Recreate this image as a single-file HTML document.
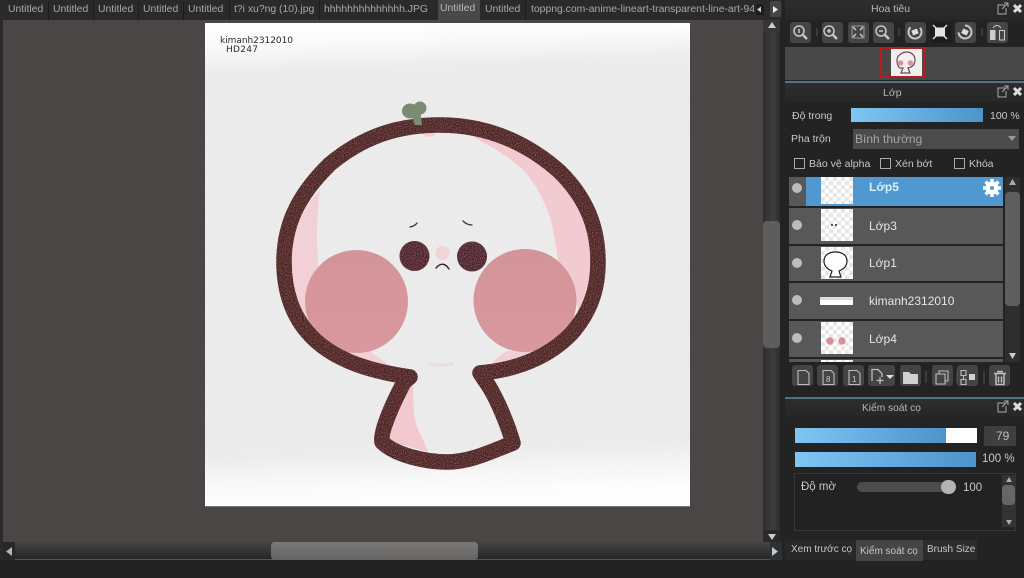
<!DOCTYPE html>
<html><head><meta charset="utf-8"><style>
html,body{margin:0;padding:0;background:#232323}
#r{position:relative;width:1024px;height:578px;overflow:hidden;background:#232323;font-family:"Liberation Sans",sans-serif;color:#c4c4c4;font-size:11px}
#r div,#r span.t{position:absolute}
.t{white-space:nowrap;line-height:14px}
.tab{color:#a9a9a9;top:3px;font-size:10.4px}
.sep{position:absolute;top:1px;width:1px;height:19px;background:#1c1c1c}
.hd{background:linear-gradient(#2e2d2d,#282727);left:785px;width:239px}
.btn{background:#454545;border-radius:3px;width:21px;height:21px;top:22px}
.row{left:789px;width:214px;background:#585858}
.eye{left:792px;width:10px;height:10px;border-radius:50%;background:#bcbcbc}
.th{left:821px;width:32px;height:32px;background-color:#fff;background-image:linear-gradient(45deg,#e6e6e6 25%,transparent 25%,transparent 75%,#e6e6e6 75%),linear-gradient(45deg,#e6e6e6 25%,transparent 25%,transparent 75%,#e6e6e6 75%);background-size:8px 8px;background-position:0 0,4px 4px}
.nm{left:869px;color:#e6e6e6;font-size:12px}
.tb{background:#444;border-radius:3px;width:21px;height:21px;top:365px}
.bar{background:linear-gradient(90deg,#7fc6f5,#4c94c9);}
.ck{width:9px;height:9px;border:1px solid #aaa;top:158px}
svg{position:absolute;overflow:visible}
</style></head><body><div id="r">

<div style="left:0;top:0;width:3px;height:560px;background:#2a2a2a"></div>
<div style="left:3px;top:20px;width:777px;height:522px;background:#4a4645"></div>

<!-- tabs -->
<div style="left:0;top:0;width:784px;height:20px;background:#2b2a2a"></div>
<div style="left:438px;top:0;width:42px;height:20px;background:#4a4948"></div>
<div class="sep" style="left:48px"></div><div class="sep" style="left:93px"></div><div class="sep" style="left:138px"></div><div class="sep" style="left:183px"></div><div class="sep" style="left:229px"></div><div class="sep" style="left:319px"></div><div class="sep" style="left:525px"></div>
<span class="t tab" style="left:8px">Untitled</span>
<span class="t tab" style="left:53px">Untitled</span>
<span class="t tab" style="left:98px">Untitled</span>
<span class="t tab" style="left:143px">Untitled</span>
<span class="t tab" style="left:188px">Untitled</span>
<span class="t tab" style="left:234px">t?i xu?ng (10).jpg</span>
<span class="t tab" style="left:324px">hhhhhhhhhhhhhh.JPG</span>
<span class="t tab" style="left:440px;color:#b8b8b8;top:2px">Untitled</span>
<span class="t tab" style="left:485px">Untitled</span>
<span class="t tab" style="left:531px;width:224px;overflow:hidden">toppng.com-anime-lineart-transparent-line-art-94</span>
<div style="left:754px;top:0;width:30px;height:20px;background:#2b2a2a"></div>
<div style="left:756px;top:4px;width:8px;height:11px;background:#1c1c1c;border-radius:2px"></div>
<div style="left:770px;top:1px;width:11px;height:16px;background:#454545;border-radius:2px"></div>
<svg style="left:0;top:0" width="784" height="20"><path d="M757 9.500l4-3v6z" fill="#ccc"/><path d="M773 6l5 3.500-5 3.500z" fill="#eee"/></svg>

<!-- canvas -->
<svg style="left:205px;top:23px" width="485" height="483" viewBox="205 23 485 483">
<defs>
<filter id="n" x="0" y="0" width="100%" height="100%"><feTurbulence type="fractalNoise" baseFrequency="1.1" numOctaves="2" seed="4"/><feColorMatrix values="0 0 0 0 .45 0 0 0 0 .45 0 0 0 0 .45 .7 0 0 0 -.2"/></filter>
<filter id="m" x="0" y="0" width="100%" height="100%"><feTurbulence type="fractalNoise" baseFrequency=".9" numOctaves="2" seed="9"/><feColorMatrix values="0 0 0 0 .42 0 0 0 0 .2 0 0 0 0 .22 1.6 0 0 0 -.62"/></filter>
<linearGradient id="g" x1="0" y1="0" x2=".04" y2="1"><stop offset="0" stop-color="#fff"/><stop offset=".05" stop-color="#fcfcfc"/><stop offset=".11" stop-color="#f0f0f0"/><stop offset=".9" stop-color="#f0f0f0"/><stop offset=".95" stop-color="#f8f8f8"/><stop offset="1" stop-color="#fdfdfd"/></linearGradient>
<linearGradient id="nf" x1="0" y1="0" x2="0" y2="1"><stop offset="0" stop-color="#000"/><stop offset=".1" stop-color="#fff"/><stop offset=".88" stop-color="#fff"/><stop offset=".96" stop-color="#000"/></linearGradient>
<linearGradient id="c1" x1="0" y1="0" x2="0" y2="1"><stop offset="0" stop-color="#d3949a"/><stop offset="1" stop-color="#d8989e"/></linearGradient>
<path id="o" d="M410 377C375 372 335 362 310 335C292 316 284 290 284 262C284 225 298 195 330 164C365 135 400 125 440 125C490 125 530 145 560 172C585 197 598 225 598 262C598 290 590 312 572 333C548 358 515 370 480 373C483 378 487 383 490 388C497 400 507 422 513 443C490 452 470 462 447 462C425 462 395 455 382 442C380 432 392 405 404 382L410 377" fill="none" stroke-width="15.500" stroke-linejoin="round" stroke-linecap="round"/>
<mask id="os" maskUnits="userSpaceOnUse" x="205" y="23" width="485" height="483"><use href="#o" stroke="#fff"/><circle cx="414.500" cy="256" r="15" fill="#fff"/><circle cx="472" cy="256.500" r="15" fill="#fff"/></mask>
<mask id="nm" maskUnits="userSpaceOnUse" x="205" y="23" width="485" height="483"><rect x="205" y="23" width="485" height="483" fill="url(#nf)"/></mask>
</defs>
<rect x="205" y="23" width="485" height="483" fill="url(#g)"/>
<g mask="url(#nm)"><rect x="205" y="23" width="485" height="483" filter="url(#n)" opacity=".45"/></g>

<!-- pink shading -->
<path d="M320 190C305 205 290 235 288 262C287 285 294 310 308 330C318 340 330 350 345 355C325 340 320 320 320 300C319 285 318 270 318 257C316 240 317 215 320 190z" fill="#f3d0d5"/>
<path d="M473 137C495 130 535 150 560 175C585 200 596 235 596 262C596 285 590 305 578 325C583 305 568 290 560 280C558 260 555 235 550 217C543 198 533 177 515 163C503 153 488 145 473 137z" fill="#f2cbd1"/>
<path d="M345 352C360 362 385 372 412 375L410 370C398 368 392 368 387 364C380 358 375 355 370 351z" fill="#f3d2d6"/>
<path d="M490 366C496 358 501 354 507 351L540 351C530 358 510 365 490 368z" fill="#f1d0d4"/>
<path d="M407 382C412 384 413 385 413 387C414 400 413 412 415 420C417 430 424 440 428 452L385 440C390 425 398 402 407 382z" fill="#f2c9cf"/>
<path d="M420 132C426 138 432 139 437 132z" fill="#f1d0d4"/>

<!-- cheeks -->
<circle cx="356.500" cy="301.500" r="51.500" fill="url(#c1)"/>
<circle cx="525" cy="300.500" r="51.500" fill="url(#c1)"/>

<!-- outline -->
<use href="#o" stroke="#47211f"/>
<circle cx="414.500" cy="256" r="15" fill="#47212a"/>
<circle cx="472" cy="256.500" r="15" fill="#47212a"/>
<g mask="url(#os)"><rect x="270" y="110" width="345" height="365" filter="url(#m)"/></g>

<!-- sprout -->
<ellipse cx="410" cy="111" rx="8" ry="7.500" fill="#7a8b72"/>
<circle cx="420" cy="108" r="6.500" fill="#7a8b72"/>
<path d="M411 114L420 108L421 116L422 125L415 125z" fill="#7d8d75"/>

<circle cx="442.500" cy="253" r="7" fill="#f2d3d6"/>
<path d="M436 268Q443 260 449 269" fill="none" stroke="#3b2023" stroke-width="1.400" stroke-linecap="round"/>
<path d="M410 227Q415 226 417 223" fill="none" stroke="#3b3436" stroke-width="1.300" stroke-linecap="round"/>
<path d="M463 221Q467 225 472 225" fill="none" stroke="#3b3436" stroke-width="1.300" stroke-linecap="round"/>
<path d="M428 364Q443 367 454 363" fill="none" stroke="#e8dede" stroke-width="3"/>

<text x="220" y="43" font-family="'DejaVu Sans',sans-serif" font-size="9" fill="#2a2a2a" textLength="73">kimanh2312010</text>
<text x="226" y="52" font-family="'DejaVu Sans',sans-serif" font-size="9" fill="#2a2a2a" textLength="32">HD247</text>
</svg>
<div style="left:205px;top:506px;width:485px;height:1px;background:#777"></div>

<!-- vertical scrollbar -->
<div style="left:763px;top:20px;width:17px;height:522px;background:linear-gradient(90deg,#2e2d2d,#3f3d3c 60%,#2e2d2d)"></div>
<div style="left:763px;top:221px;width:17px;height:127px;background:#5e5d5c;border-radius:4px"></div>
<div style="left:763px;top:20px;width:17px;height:12px;background:#363535"></div>
<div style="left:763px;top:530px;width:17px;height:12px;background:#2a2a2a"></div>
<svg style="left:0;top:0" width="784" height="578"><path d="M768 28l4-6 4 6z" fill="#ccc"/><path d="M768 534l4 6 4-6z" fill="#ccc"/></svg>

<!-- horizontal scrollbar -->
<div style="left:4px;top:542px;width:778px;height:18px;background:linear-gradient(#454342,#272727);border-bottom:1px solid #46585f;box-sizing:border-box"></div>
<div style="left:271px;top:542px;width:207px;height:18px;background:linear-gradient(#7a7978,#656463);border-radius:4px"></div>
<div style="left:4px;top:542px;width:11px;height:18px;background:#282726"></div>
<div style="left:770px;top:542px;width:12px;height:18px;background:#2a3135"></div>
<svg style="left:0;top:0" width="784" height="578"><path d="M12 547v9l-6-4.500z" fill="#b5b5b5"/><path d="M772 547v9l6-4.500z" fill="#c6c6c6"/></svg>
<div style="left:0;top:560px;width:784px;height:18px;background:#232323"></div>

<!-- right panel -->
<div style="left:782px;top:0;width:242px;height:578px;background:#232323"></div>
<div class="hd" style="top:0;height:20px"></div>
<span class="t" style="left:871px;top:2px;color:#b8b8b8;font-size:10.500px">Hoa tiêu</span>
<svg style="left:996px;top:2px" width="28" height="14"><path d="M9 3H2v9h8V6M6 7l6-6M8 1h4v4" fill="none" stroke="#aaa" stroke-width="1"/><path d="M18 3l7 7M25 3l-7 7" stroke="#ddd" stroke-width="3"/></svg>

<div class="btn" style="left:790px"></div><div class="btn" style="left:822px"></div><div class="btn" style="left:848px"></div><div class="btn" style="left:873px"></div><div class="btn" style="left:905px"></div>
<div class="btn" style="left:930px;background:#1d1d1d"></div><div class="btn" style="left:955px"></div><div class="btn" style="left:987px"></div>
<svg style="left:784px;top:20px" width="240" height="28" fill="none" stroke="#c8c8c8" stroke-width="1.500">
<circle cx="15" cy="11" r="5"/><path d="M19 15l4 4" stroke-width="2.500"/><path d="M15 9v4" />
<circle cx="45" cy="11" r="5"/><path d="M49 15l4 4" stroke-width="2.500"/><path d="M43 11h4M45 9v4"/>
<rect x="68" y="6" width="12" height="12" stroke="#999" stroke-width="1"/><path d="M69 7l3 3M79 7l-3 3M69 17l3-3M79 17l-3-3"/>
<circle cx="97" cy="11" r="5"/><path d="M101 15l4 4" stroke-width="2.500"/><path d="M95 11h4"/>
<circle cx="131" cy="12" r="6.500" stroke-width="2" stroke-dasharray="30 11" transform="rotate(-40 131 12)"/><rect x="128" y="9.500" width="6" height="5" fill="#ddd" stroke="none" transform="rotate(-20 131 12)"/>
<rect x="151" y="7.500" width="10" height="9" fill="#e4e4e4" stroke="none"/><path d="M149 5l3 3M163 5l-3 3M149 19l3-3M163 19l-3-3" stroke="#ddd"/>
<circle cx="181" cy="12" r="6.500" stroke-width="2" stroke-dasharray="30 11" transform="rotate(-90 181 12)"/><rect x="178" y="9.500" width="6" height="5" fill="#ddd" stroke="none" transform="rotate(25 181 12)"/>
<rect x="206" y="10" width="5.500" height="10" fill="#ccc" stroke="none"/><rect x="215.500" y="10.500" width="5" height="9.500" stroke="#ccc" stroke-width="1"/><path d="M209 8q4-5 8 0" stroke-width="1"/>
<path d="M33 8v8M115 8v8M198 8v8" stroke="#555" stroke-width="1"/>
</svg>

<div style="left:785px;top:47px;width:239px;height:33px;background:#484848"></div>
<div style="left:880px;top:47px;width:41px;height:27px;border:2px solid #b81c1c;background:#4a4645"></div>
<div style="left:891px;top:49px;width:31px;height:27px;background:#f1f0f0"></div>
<svg style="left:891px;top:49px" width="31" height="27"><path d="M9 19h3l-2 5h9l-2-5c5-1 7-4 7-8 0-5-4-8-8-8S6 6 6 11c0 4 1 7 3 8z" fill="#f5f0f0" stroke="#6a4a4c" stroke-width="1.200"/><circle cx="9.500" cy="14" r="2.800" fill="#d8969c"/><circle cx="19.500" cy="14" r="2.800" fill="#d8969c"/></svg>

<div style="left:785px;top:81px;width:239px;height:2px;background:#4d7488"></div>
<div class="hd" style="top:83px;height:19px"></div>
<span class="t" style="left:883px;top:86px;color:#b8b8b8;font-size:10.500px">Lớp</span>
<svg style="left:996px;top:85px" width="28" height="14"><path d="M9 3H2v9h8V6M6 7l6-6M8 1h4v4" fill="none" stroke="#aaa" stroke-width="1"/><path d="M18 3l7 7M25 3l-7 7" stroke="#ddd" stroke-width="3"/></svg>

<span class="t" style="left:792px;top:109px;color:#c8c8c8;font-size:10.500px">Độ trong</span>
<div class="bar" style="left:851px;top:108px;width:132px;height:14px"></div>
<span class="t" style="left:990px;top:109px;color:#c8c8c8;font-size:10.500px">100 %</span>
<span class="t" style="left:791px;top:132px;color:#c8c8c8;font-size:10.500px">Pha trộn</span>
<div style="left:853px;top:129px;width:166px;height:20px;background:#4b4b4b"></div>
<span class="t" style="left:855px;top:132px;color:#a5a5a5;font-size:12px">Bình thường</span>
<svg style="left:1008px;top:136px" width="10" height="6"><path d="M0 0h8l-4 5z" fill="#999"/></svg>
<div class="ck" style="left:794px"></div><span class="t" style="left:809px;top:157px;color:#c8c8c8;font-size:10.500px">Bảo vệ alpha</span>
<div class="ck" style="left:880px"></div><span class="t" style="left:895px;top:157px;color:#c8c8c8;font-size:10.500px">Xén bớt</span>
<div class="ck" style="left:954px"></div><span class="t" style="left:969px;top:157px;color:#c8c8c8;font-size:10.500px">Khóa</span>

<!-- layers -->
<div class="row" style="top:177px;height:29px;background:#4f99d0"></div>
<div style="left:789px;top:177px;width:17px;height:29px;background:#585858"></div>
<div class="row" style="top:208px;height:36px"></div>
<div class="row" style="top:246px;height:35px"></div>
<div class="row" style="top:283px;height:36px"></div>
<div class="row" style="top:321px;height:36px"></div>
<div class="row" style="top:359px;height:3px"></div>
<div class="eye" style="top:183px"></div><div class="eye" style="top:220px"></div><div class="eye" style="top:258px"></div><div class="eye" style="top:295px"></div><div class="eye" style="top:333px"></div>
<div class="th" style="top:177px;height:27px"></div>
<div class="th" style="top:209px"></div>
<div class="th" style="top:247px"></div>
<div class="th" style="top:322px"></div>
<div class="th" style="top:360px;height:2px"></div>
<div style="left:820px;top:297px;width:33px;height:3px;background:#dcdcdc"></div>
<div style="left:820px;top:300px;width:33px;height:5px;background:#fff"></div>
<svg style="left:821px;top:177px" width="32" height="190">
<circle cx="11" cy="48" r="1" fill="#222"/><circle cx="15" cy="48" r="1" fill="#222"/>
<path d="M11 94L9 100H20L18 94C23 92 26 89 26 84C26 78 21 75 14.500 75C8 75 3 78 3 84C3 89 6 92 11 94z" fill="#fff" stroke="#2b1c1c" stroke-width="1.200"/>
<circle cx="9" cy="164" r="3.700" fill="#d8909a"/><circle cx="21" cy="164" r="3.700" fill="#d8909a"/>
</svg>
<span class="t nm" style="top:180px;color:#d8f0ff;font-weight:bold">Lớp5</span>
<span class="t nm" style="top:219px">Lớp3</span>
<span class="t nm" style="top:256px">Lớp1</span>
<span class="t nm" style="top:294px">kimanh2312010</span>
<span class="t nm" style="top:332px">Lớp4</span>
<svg style="left:982px;top:178px" width="20" height="20"><circle cx="10" cy="10" r="6.500" fill="#fff"/><g stroke="#fff" stroke-width="3.500"><path d="M10 1v18M1 10h18M3.600 3.600l12.800 12.800M16.400 3.600L3.600 16.400"/></g><circle cx="10" cy="10" r="2" fill="#4f99d0"/></svg>

<div style="left:1005px;top:177px;width:15px;height:185px;background:#2e2e2e"></div>
<div style="left:1005px;top:192px;width:15px;height:114px;background:#5e5e5e;border-radius:4px"></div>
<svg style="left:1005px;top:177px" width="15" height="185"><path d="M4 8l3.500-6L11 8z" fill="#aaa"/><path d="M4 176l3.500 6 3.500-6z" fill="#ccc"/></svg>

<!-- layer toolbar -->
<div class="tb" style="left:792px"></div><div class="tb" style="left:817px"></div><div class="tb" style="left:843px"></div><div class="tb" style="left:868px;width:27px"></div><div class="tb" style="left:900px"></div><div class="tb" style="left:932px"></div><div class="tb" style="left:957px"></div><div class="tb" style="left:989px"></div>
<svg style="left:784px;top:360px" width="240" height="32" fill="none" stroke="#bdbdbd" stroke-width="1.100">
<path d="M14 10.500h8l3 3v11H14z"/>
<path d="M39 10.500h8l3 3v11H39z"/><text x="42" y="22" font-size="8" fill="#ccc" stroke="none" font-family="Liberation Sans">8</text>
<path d="M65 10.500h8l3 3v11H65z"/><text x="68" y="22" font-size="8" fill="#ccc" stroke="none" font-family="Liberation Sans">1</text>
<path d="M88 21V9.500h6l4 4V17M96 17v7M92.500 20.500h7" stroke-width="1.300"/><path d="M102 15h8l-4 4z" fill="#ddd" stroke="none"/>
<path d="M119 12h6l2 2h7v10h-15z" fill="#d0d0d0" stroke="none"/>
<path d="M152 14h9v10h-9z"/><path d="M155 14v-3h9v10h-3"/>
<path d="M177 10.500h5v5h-5zM177 19.500h5v5h-5zM179.500 15.500v4" /><rect x="185" y="14" width="6" height="6" fill="#d0d0d0" stroke="none"/>
<path d="M210 13.500h12M212 13.500v11h8v-11M214 13.500v-2h4v2M214.500 16.500v6M217.500 16.500v6" stroke-width="1.500"/>
<path d="M142 11v12M173 11v12M200 11v12" stroke="#555" stroke-width="1"/>
</svg>

<!-- brush control -->
<div style="left:785px;top:397px;width:239px;height:2px;background:#4d7488"></div>
<div class="hd" style="top:399px;height:18px"></div>
<span class="t" style="left:862px;top:402px;color:#b8b8b8;font-size:10.200px">Kiểm soát cọ</span>
<svg style="left:996px;top:400px" width="28" height="14"><path d="M9 3H2v9h8V6M6 7l6-6M8 1h4v4" fill="none" stroke="#aaa" stroke-width="1"/><path d="M18 3l7 7M25 3l-7 7" stroke="#ddd" stroke-width="3"/></svg>

<div style="left:795px;top:428px;width:182px;height:15px;background:#fff"></div>
<div class="bar" style="left:795px;top:428px;width:151px;height:15px"></div>
<div style="left:984px;top:426px;width:32px;height:20px;background:#3f3f3f;border-radius:2px"></div>
<span class="t" style="left:996px;top:429px;font-size:12px;color:#bbb">79</span>
<div class="bar" style="left:795px;top:452px;width:181px;height:15px"></div>
<span class="t" style="left:982px;top:452px;font-size:11.500px;color:#c8c8c8">100 %</span>
<div style="left:794px;top:473px;width:220px;height:56px;border:1px solid #383838;background:#222"></div>
<span class="t" style="left:801px;top:480px;color:#c8c8c8;font-size:11.500px">Độ mờ</span>
<div style="left:857px;top:482px;width:95px;height:10px;background:#4c4c4c;border-radius:5px"></div>
<div style="left:941px;top:480px;width:15px;height:14px;background:#b3b3b3;border-radius:7px"></div>
<span class="t" style="left:963px;top:481px;font-size:11.500px;color:#c8c8c8">100</span>
<div style="left:1002px;top:475px;width:14px;height:52px;background:#333"></div>
<div style="left:1002px;top:485px;width:13px;height:20px;background:#666;border-radius:4px"></div>
<svg style="left:1002px;top:475px" width="14" height="52"><path d="M4 7l3-5 3 5z" fill="#aaa"/><path d="M4 45l3 5 3-5z" fill="#aaa"/></svg>

<div style="left:785px;top:540px;width:71px;height:20px;background:#282828"></div>
<div style="left:856px;top:540px;width:67px;height:21px;background:#454545"></div>
<div style="left:923px;top:540px;width:54px;height:20px;background:#2c2c2c"></div>
<span class="t" style="left:791px;top:543px;font-size:10px;color:#c8c8c8">Xem trước cọ</span>
<span class="t" style="left:860px;top:545px;font-size:10px;color:#c8c8c8">Kiểm soát cọ</span>
<span class="t" style="left:927px;top:543px;font-size:10px;color:#c8c8c8">Brush Size</span>
</div></body></html>
